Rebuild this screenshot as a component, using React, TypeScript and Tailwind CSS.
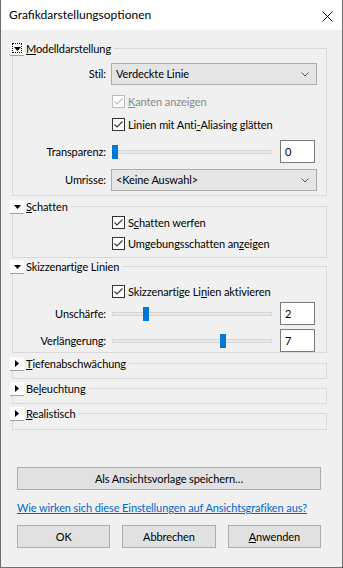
import React from "react";

const FONT = { fontFamily: 'Lato, "Noto Sans", Arial, sans-serif' };
const TXT = "text-[11px] leading-[14px] tracking-[-0.1px]";

function Toggle({ open, focus }: { open: boolean; focus?: boolean }) {
  return (
    <div className="relative w-[14px] h-[14px] bg-[#fcfcfc] border-b border-[#a0a0a0] flex items-center justify-center shrink-0">
      {focus && <div className="absolute left-[2px] top-[1px] w-[10px] h-[10px] border border-dotted border-black" />}
      {open ? (
        <svg width="7" height="4" viewBox="0 0 7 4" className="relative">
          <polygon points="0,0 7,0 3.5,4" fill="#000" />
        </svg>
      ) : (
        <svg width="4" height="7" viewBox="0 0 4 7">
          <polygon points="0,0 4,3.5 0,7" fill="#000" />
        </svg>
      )}
    </div>
  );
}

function Group({
  title,
  open,
  focus,
  className,
  children,
}: {
  title: React.ReactNode;
  open: boolean;
  focus?: boolean;
  className?: string;
  children?: React.ReactNode;
}) {
  return (
    <div className={"relative border border-[#d9d9d9] " + (className ?? "")}>
      <div className="absolute top-[-7px] left-[-3px] h-[14px] flex items-center bg-[#f0f0f0] pr-[3px]">
        <Toggle open={open} focus={focus} />
        <span className={"ml-[2px] text-black whitespace-nowrap " + TXT}>{title}</span>
      </div>
      {children}
    </div>
  );
}

function Check({ checked, disabled, label, className }: { checked: boolean; disabled?: boolean; label: React.ReactNode; className?: string }) {
  return (
    <div className={"flex items-center h-[13px] pl-[99px] " + (className ?? "")}>
      <div
        className={
          "w-[13px] h-[13px] border bg-white flex items-center justify-center shrink-0 " +
          (disabled ? "border-[#bcbcbc]" : "border-[#333333]")
        }
      >
        {checked && (
          <svg width="11" height="11" viewBox="0 0 11 11">
            <polyline points="1.5,5.5 4,8 9.5,2.5" fill="none" stroke={disabled ? "#bcbcbc" : "#333333"} strokeWidth="1.1" />
          </svg>
        )}
      </div>
      <span className={"ml-[3px] whitespace-nowrap " + TXT + " " + (disabled ? "text-[#8a8a8a]" : "text-black")}>{label}</span>
    </div>
  );
}

function Select({ label, value, className }: { label: string; value: string; className?: string }) {
  return (
    <div className={"flex items-center " + (className ?? "")}>
      <div className={"w-[93px] text-right text-black " + TXT}>{label}</div>
      <div className="ml-[5px] w-[206px] h-[22px] bg-[#e5e5e5] border border-[#adadad] flex items-center pl-[4px] pr-[7px]">
        <span className={"flex-1 text-black " + TXT}>{value}</span>
        <svg width="8" height="5" viewBox="0 0 8 5">
          <polyline points="0.5,0.5 4,4 7.5,0.5" fill="none" stroke="#555" strokeWidth="1" />
        </svg>
      </div>
    </div>
  );
}

function Slider({ label, value, max, className }: { label: string; value: number; max: number; className?: string }) {
  const left = (value / max) * (160 - 6);
  return (
    <div className={"flex items-center h-[23px] " + (className ?? "")}>
      <div className={"w-[93px] text-right text-black " + TXT}>{label}</div>
      <div className="ml-[6px] relative w-[160px] h-[14px] flex items-center">
        <div className="w-full h-[4px] bg-[#e7e7e7] border border-[#d6d6d6]" />
        <div className="absolute top-0 w-[6px] h-[14px] bg-[#0078d7]" style={{ left }} />
      </div>
      <div className={"ml-[8px] w-[35px] h-[23px] bg-white border border-[#7a7a7a] flex items-center pl-[4px] text-black " + TXT}>
        {value}
      </div>
    </div>
  );
}

function Btn({ children, className }: { children: React.ReactNode; className?: string }) {
  return (
    <div
      className={
        "h-[23px] bg-[#e1e1e1] border border-[#adadad] flex items-center justify-center text-black " + TXT + " " +
        (className ?? "")
      }
    >
      {children}
    </div>
  );
}

export default function App() {
  return (
    <div className="w-[343px] h-[568px] bg-[#f0f0f0] border-l border-r border-b border-[#6e6e6e] flex flex-col overflow-hidden" style={FONT}>
      <div className="h-[30px] bg-white flex items-center pl-[8px] pr-[9px] shrink-0">
        <span className="flex-1 text-black text-[12px] leading-[14px]">Grafikdarstellungsoptionen</span>
        <svg width="11" height="11" viewBox="0 0 11 11" className="mt-[2px]">
          <line x1="0.5" y1="0.5" x2="10.5" y2="10.5" stroke="#000" strokeWidth="1" />
          <line x1="10.5" y1="0.5" x2="0.5" y2="10.5" stroke="#000" strokeWidth="1" />
        </svg>
      </div>

      <div className="flex flex-col pl-[11px] pr-[15px]">
        <Group
          open
          focus
          className="mt-[18px] pb-[4px]"
          title={
            <>
              <u>M</u>odelldarstellung
            </>
          }
        >
          <Select label="Stil:" value="Verdeckte Linie" className="mt-[14px]" />
          <Check
            checked
            disabled
            className="mt-[10px]"
            label={
              <>
                <u>K</u>anten anzeigen
              </>
            }
          />
          <Check
            checked
            className="mt-[10px]"
            label={
              <>
                Linien mit Anti<u>-</u>Aliasing glätten
              </>
            }
          />
          <Slider label="Transparenz:" value={0} max={100} className="mt-[9px]" />
          <Select label="Umrisse:" value="<Keine Auswahl>" className="mt-[6px]" />
        </Group>

        <Group
          open
          className="mt-[10px] pb-[7px]"
          title={
            <>
              <u>S</u>chatten
            </>
          }
        >
          <Check
            checked
            className="mt-[9px]"
            label={
              <>
                S<u>c</u>hatten werfen
              </>
            }
          />
          <Check
            checked
            className="mt-[8px]"
            label={
              <>
                Umgebungsschatten an<u>z</u>eigen
              </>
            }
          />
        </Group>

        <Group
          open
          className="mt-[8px]"
          title={
            <>
              Skizzenarti<u>g</u>e Linien
            </>
          }
        >
          <Check
            checked
            className="mt-[18px]"
            label={
              <>
                Skizzenartige Li<u>n</u>ien aktivieren
              </>
            }
          />
          <Slider label="Unschärfe:" value={2} max={10} className="mt-[4px]" />
          <Slider label="Verlängerung:" value={7} max={10} className="mt-[4px]" />
        </Group>

        <Group
          open={false}
          className="mt-[10px] h-[16px]"
          title={
            <>
              <u>T</u>iefenabschwächung
            </>
          }
        />
        <Group
          open={false}
          className="mt-[9px] h-[16px]"
          title={
            <>
              Be<u>l</u>euchtung
            </>
          }
        />
        <Group
          open={false}
          className="mt-[9px] h-[17px]"
          title={
            <>
              <u>R</u>ealistisch
            </>
          }
        />
      </div>

      <div className="flex flex-col pl-[16px] pr-[21px]">
        <Btn className="mt-[37px] h-[22px]">Als Ansichtsvorlage speichern…</Btn>
        <div className="mt-[10px] h-[16px] flex items-center">
          <span className={"text-[#0066cc] underline whitespace-nowrap " + TXT}>Wie wirken sich diese Einstellungen auf Ansichtsgrafiken aus?</span>
        </div>
        <div className="mt-[9px] grid grid-cols-3 gap-[12px]">
          <Btn>OK</Btn>
          <Btn>Abbrechen</Btn>
          <Btn>
            <span>
              <u>A</u>nwenden
            </span>
          </Btn>
        </div>
      </div>
    </div>
  );
}
